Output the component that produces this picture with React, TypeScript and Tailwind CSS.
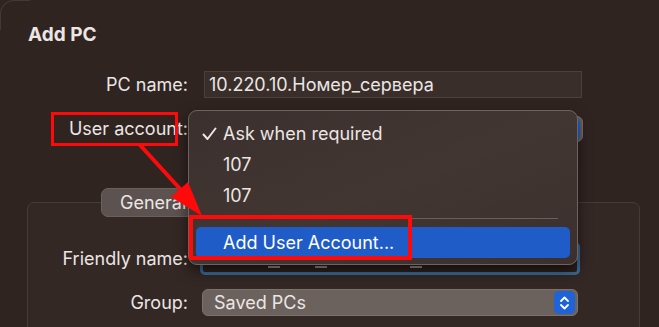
import React from "react";

const menuItems = ["107", "107"];

const Stepper: React.FC = () => (
  <div className="w-[21px] h-[23px] rounded-[5px] bg-[#1f63d9] flex items-center justify-center">
    <svg width="11" height="16" viewBox="0 0 11 16" fill="none">
      <path d="M2 6 L5.5 2.5 L9 6" stroke="white" strokeWidth="1.8" strokeLinecap="round" strokeLinejoin="round" />
      <path d="M2 10 L5.5 13.5 L9 10" stroke="white" strokeWidth="1.8" strokeLinecap="round" strokeLinejoin="round" />
    </svg>
  </div>
);

const App: React.FC = () => {
  return (
    <div
      className="relative w-[659px] h-[327px] overflow-hidden bg-[#302421] text-[#ebe6e4]"
      style={{ fontFamily: "Inter, 'Open Sans', sans-serif" }}
    >
      {/* window corner */}
      <div className="absolute left-0 top-0 w-[30px] h-[30px] rounded-tl-[14px] border-l border-t border-[#433834]" />

      <h1 className="pl-[28px] pt-[23px] text-[19px] font-bold leading-[24px]">Add PC</h1>

      {/* PC name */}
      <div className="mt-[24px] flex items-center">
        <div className="w-[188px] text-right text-[18px] leading-[24px]">PC name:</div>
        <div className="ml-[16px] w-[378px] h-[27px] bg-[#3a2e2b] border border-[#4b403c] flex items-center pl-[4px] text-[18px]">
          10.220.10.Номер_сервера
        </div>
      </div>

      {/* User account */}
      <div className="mt-[18px] flex items-center">
        <div className="w-[188px] text-right text-[18px] leading-[24px]">User account:</div>
        <div className="ml-[14px] w-[381px] h-[26px] rounded-[6px] bg-[#6a615d] border border-[#7a716d] flex items-center justify-end pr-[2px]">
          <Stepper />
        </div>
      </div>

      {/* tab + group box */}
      <div className="mt-[46px]">
        <div className="relative z-10 ml-[101px] w-[300px] h-[29px] rounded-[7px] bg-[#5c524f] border border-[#6a605c] flex items-center pl-[18px] text-[18px]">
          General
        </div>
        <div className="-mt-[15px] ml-[27px] w-[613px] h-[200px] rounded-[7px] border border-[#463b37] bg-[#342825] pt-[39px]">
          <div className="flex items-center">
            <div className="w-[160px] text-right text-[18px] leading-[24px]">Friendly name:</div>
            <div className="ml-[12px] w-[380px] h-[33px] rounded-[5px] border-[3px] border-[#3d6b97] bg-[#2c211e] flex items-end pb-[4px]">
              <div className="ml-[65px] w-[12px] h-[2px] bg-[#9a918d]" />
              <div className="ml-[35px] w-[12px] h-[2px] bg-[#9a918d]" />
              <div className="ml-[83px] w-[12px] h-[2px] bg-[#9a918d]" />
            </div>
          </div>
          <div className="mt-[14px] flex items-center">
            <div className="w-[160px] text-right text-[18px] leading-[24px]">Group:</div>
            <div className="ml-[14px] w-[376px] h-[27px] rounded-[6px] bg-[#6b625e] border border-[#7b726e] flex items-center justify-between pl-[11px] pr-[2px] text-[18px]">
              <span>Saved PCs</span>
              <Stepper />
            </div>
          </div>
        </div>
      </div>

      {/* popup menu */}
      <div className="absolute z-20 left-[188px] top-[110px] w-[390px] h-[155px] rounded-[9px] border border-[#6e635f] bg-gradient-to-br from-[#3b302d] via-[#413632] to-[#3b302d] shadow-[0_6px_14px_rgba(0,0,0,0.55)] pt-[7px] px-[7px] text-[18px]">
        <div className="h-[31px] flex items-center">
          <svg className="ml-[6px]" width="15" height="14" viewBox="0 0 15 14" fill="none">
            <path d="M1.5 7.5 L5.5 12 L13.5 1.5" stroke="#ebe6e4" strokeWidth="2" strokeLinecap="round" strokeLinejoin="round" />
          </svg>
          <span className="ml-[6px]">Ask when required</span>
        </div>
        {menuItems.map((item, i) => (
          <div key={i} className="h-[31px] flex items-center pl-[27px]">
            {item}
          </div>
        ))}
        <div className="mt-[7px] ml-[2px] mr-[12px] h-px bg-[#6a5f5b]" />
        <div className="mt-[8px] h-[31px] rounded-[5px] bg-[#1f5cc7] flex items-center pl-[27px] text-white">
          Add User Account...
        </div>
      </div>

      {/* annotations */}
      <div className="absolute z-30 left-[51px] top-[112px] w-[127px] h-[34px] border-[3px] border-[#ff0a0a]" />
      <div className="absolute z-30 left-[189px] top-[215px] w-[223px] h-[45px] border-4 border-[#ff0a0a]" />
      <svg className="absolute z-30 left-0 top-0" width="659" height="327" viewBox="0 0 659 327">
        <line x1="140" y1="145" x2="182" y2="191" stroke="#ff0a0a" strokeWidth="4" />
        <polygon points="202,216 171,197 188,182" fill="#ff0a0a" />
      </svg>
    </div>
  );
};

export default App;
